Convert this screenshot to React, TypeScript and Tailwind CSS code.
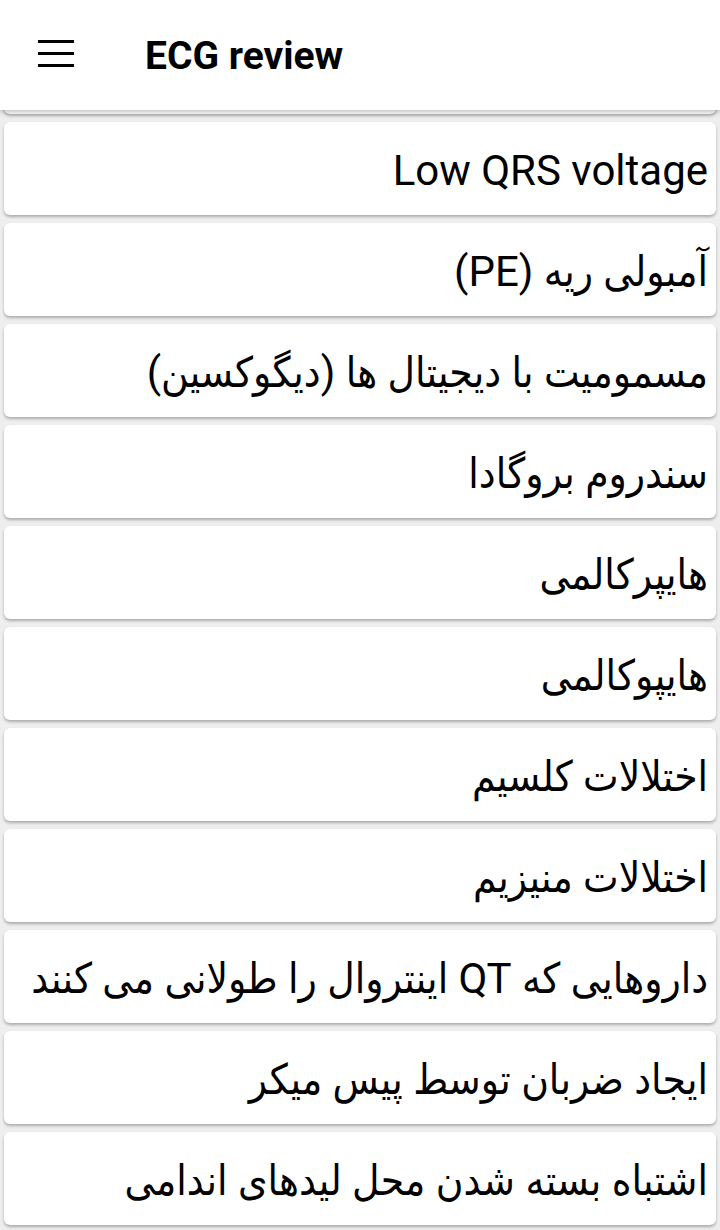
import React from "react";

const topics = [
  "Low QRS voltage",
  "آمبولی ریه (PE)",
  "مسمومیت با دیجیتال ها (دیگوکسین)",
  "سندروم بروگادا",
  "هایپرکالمی",
  "هایپوکالمی",
  "اختلالات کلسیم",
  "اختلالات منیزیم",
  "داروهایی که QT اینتروال را طولانی می کنند",
  "ایجاد ضربان توسط پیس میکر",
  "اشتباه بسته شدن محل لیدهای اندامی",
];

const font = { fontFamily: '"Roboto", "DejaVu Sans Condensed", "DejaVu Sans", sans-serif' };

const TopicCard = ({ title }: { title?: string }) => (
  <div className="h-[93px] shrink-0 rounded-md bg-white shadow-[0_2px_3px_rgba(0,0,0,0.28)] flex items-center justify-end px-2 pt-[4px]">
    {title && (
      <p dir="auto" className="text-[42px] leading-none text-black whitespace-nowrap">
        {title}
      </p>
    )}
  </div>
);

const App = () => {
  return (
    <div style={font} className="w-[720px] h-[1230px] flex flex-col bg-[#eeeeee] overflow-hidden">
      <header className="relative z-10 h-[110px] shrink-0 bg-white shadow-[0_2px_5px_rgba(0,0,0,0.25)] flex items-center">
        <button className="ml-[38px] w-[36px] h-[27px] flex flex-col justify-between mb-[4px]">
          <span className="block h-[3px] w-full bg-black" />
          <span className="block h-[3px] w-full bg-black" />
          <span className="block h-[3px] w-full bg-black" />
        </button>
        <h1 className="ml-[71px] text-[39px] font-bold text-black leading-none mt-[2px]">ECG review</h1>
      </header>
      <main className="flex-1 overflow-hidden px-1">
        {/* list is scrolled a little: the previous card peeks out under the toolbar */}
        <div className="flex flex-col gap-2 mt-[-89px]">
          <TopicCard />
          {topics.map((t) => (
            <TopicCard key={t} title={t} />
          ))}
        </div>
      </main>
    </div>
  );
};

export default App;
